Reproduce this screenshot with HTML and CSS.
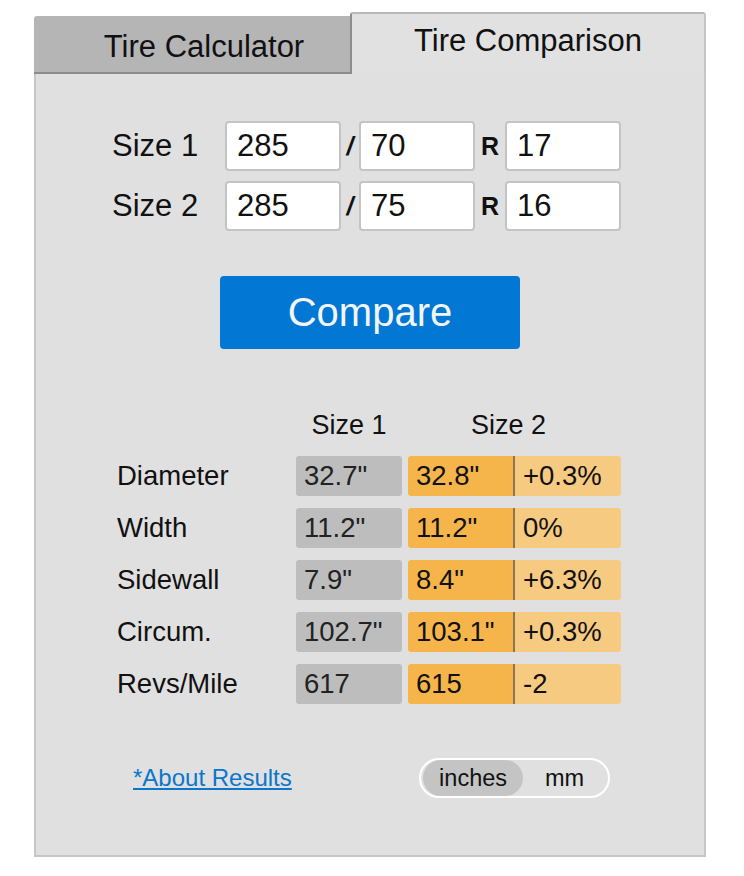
FILE: index.html
```html
<!DOCTYPE html>
<html lang="en">
<head>
    <meta charset="UTF-8">
    <meta name="viewport" content="width=device-width, initial-scale=1.0">
    <title>Tire Comparison</title>
    <link rel="stylesheet" href="styles.css">
</head>
<body>

    <div class="widget">
        <!-- Tabs -->
        <div class="tabs">
            <div class="tab tab-off">Tire Calculator</div>
            <div class="tab tab-on">Tire Comparison</div>
        </div>

        <div class="panel">
            <!-- Size inputs -->
            <div class="sizes">
                <div class="size-row">
                    <label class="size-label">Size 1</label>
                    <input type="text" class="size-input" value="285">
                    <span class="sep">/</span>
                    <input type="text" class="size-input" value="70">
                    <span class="sep sep-r">R</span>
                    <input type="text" class="size-input" value="17">
                </div>
                <div class="size-row">
                    <label class="size-label">Size 2</label>
                    <input type="text" class="size-input" value="285">
                    <span class="sep">/</span>
                    <input type="text" class="size-input" value="75">
                    <span class="sep sep-r">R</span>
                    <input type="text" class="size-input" value="16">
                </div>
            </div>

            <button class="compare-btn">Compare</button>

            <!-- Results -->
            <div class="results">
                <div></div>
                <div class="col-head">Size 1</div>
                <div class="col-head col-head-2">Size 2</div>

                <div class="row-label">Diameter</div>
                <div class="cell cell-1">32.7"</div>
                <div class="cell-pair"><span class="cell cell-2">32.8"</span><span class="cell cell-diff">+0.3%</span></div>

                <div class="row-label">Width</div>
                <div class="cell cell-1">11.2"</div>
                <div class="cell-pair"><span class="cell cell-2">11.2"</span><span class="cell cell-diff">0%</span></div>

                <div class="row-label">Sidewall</div>
                <div class="cell cell-1">7.9"</div>
                <div class="cell-pair"><span class="cell cell-2">8.4"</span><span class="cell cell-diff">+6.3%</span></div>

                <div class="row-label">Circum.</div>
                <div class="cell cell-1">102.7"</div>
                <div class="cell-pair"><span class="cell cell-2">103.1"</span><span class="cell cell-diff">+0.3%</span></div>

                <div class="row-label">Revs/Mile</div>
                <div class="cell cell-1">617</div>
                <div class="cell-pair"><span class="cell cell-2">615</span><span class="cell cell-diff">-2</span></div>
            </div>

            <!-- Footer -->
            <div class="panel-foot">
                <a href="#" class="about-link">*About Results</a>
                <div class="unit-toggle">
                    <span class="unit unit-on">inches</span>
                    <span class="unit">mm</span>
                </div>
            </div>
        </div>
    </div>

</body>
</html>
```

FILE: styles.css
```css
body {
    margin: 0;
    background-color: #ffffff;
    font-family: "Liberation Sans", Arial, sans-serif;
    color: #111;
}
.widget {
    width: 672px;
    margin: 12px 0 0 34px;
}

/* Tabs */
.tabs {
    display: flex;
    align-items: flex-end;
}
.tab {
    box-sizing: border-box;
    display: flex;
    justify-content: center;
    align-items: center;
    font-size: 31px;
}
.tab-off {
    width: 316px;
    height: 58px;
    background-color: #b5b5b5;
    border-bottom: 2px solid #8c8c8c;
    border-top-left-radius: 3px;
    padding: 6px 0 0 24px;
}
.tab-on {
    width: 356px;
    height: 62px;
    background-color: #e1e1e1;
    border-top: 2px solid #b8b8b8;
    border-right: 2px solid #c4c4c4;
    border-left: 2px solid #8c8c8c;
    border-radius: 3px 3px 0 0;
    padding-bottom: 6px;
}

/* Panel */
.panel {
    box-sizing: border-box;
    height: 783px;
    background-color: #e0e0e0;
    border: 2px solid #c6c6c6;
    border-top: none;
    display: flex;
    flex-direction: column;
    align-items: center;
}
.sizes {
    margin-top: 47px;
    display: flex;
    flex-direction: column;
    gap: 10px;
    align-self: flex-start;
    padding-left: 76px;
}
.size-row {
    display: flex;
    align-items: center;
}
.size-label {
    width: 113px;
    font-size: 31px;
}
.size-input {
    box-sizing: border-box;
    width: 116px;
    height: 50px;
    border: 2px solid #c4c4c4;
    border-radius: 4px;
    background-color: #fff;
    padding: 0 10px;
    font-family: "Liberation Sans", Arial, sans-serif;
    font-size: 31px;
    color: #111;
}
.sep {
    width: 18px;
    text-align: center;
    font-size: 25px;
    font-weight: bold;
    font-style: italic;
}
.sep-r {
    width: 30px;
    font-style: normal;
}

/* Compare button */
.compare-btn {
    margin-top: 45px;
    width: 300px;
    height: 73px;
    border: none;
    border-radius: 4px;
    background-color: #0277d4;
    color: #f2f6fb;
    font-family: "Liberation Sans", Arial, sans-serif;
    font-size: 40px;
    cursor: pointer;
}

/* Results grid */
.results {
    margin-top: 58px;
    align-self: flex-start;
    margin-left: 81px;
    display: grid;
    grid-template-columns: 173px 106px 213px;
    grid-auto-rows: 40px;
    grid-template-rows: 37px;
    column-gap: 6px;
    row-gap: 12px;
    align-items: center;
}
.col-head {
    text-align: center;
    font-size: 27px;
}
.col-head-2 {
    padding-right: 12px;
}
.row-label {
    font-size: 27.5px;
}
.cell {
    box-sizing: border-box;
    height: 40px;
    display: flex;
    align-items: center;
    padding-left: 8px;
    font-size: 27.5px;
    border-radius: 3px;
}
.cell-1 {
    background-color: #bdbdbd;
    color: #222;
}
.cell-pair {
    display: flex;
    height: 40px;
}
.cell-2 {
    width: 107px;
    background-color: #f6b54b;
    border-radius: 3px 0 0 3px;
    border-right: 2px solid #8d7652;
}
.cell-diff {
    flex: 1;
    background-color: #f7ca82;
    border-radius: 0 3px 3px 0;
}

/* Footer row */
.panel-foot {
    margin-top: 54px;
    align-self: stretch;
    display: flex;
    align-items: center;
    padding-left: 97px;
}
.about-link {
    width: 286px;
    font-size: 24px;
    color: #0a76cc;
}
.unit-toggle {
    box-sizing: border-box;
    width: 191px;
    height: 40px;
    border: 2px solid #fff;
    border-radius: 20px;
    display: flex;
    align-items: center;
    padding: 0 2px;
}
.unit {
    font-size: 23.5px;
    height: 36px;
    display: flex;
    align-items: center;
    justify-content: center;
    width: 86px;
}
.unit-on {
    width: 104px;
    background-color: #c4c4c4;
    border-radius: 18px;
}
```
